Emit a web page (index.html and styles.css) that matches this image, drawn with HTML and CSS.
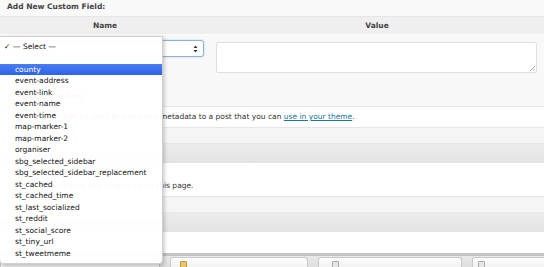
FILE: index.html
```html
<!DOCTYPE html>
<html>
<head>
<meta charset="utf-8">
<link rel="stylesheet" href="styles.css">
</head>
<body>
<div class="page">
  <div class="title">Add New Custom Field:</div>
  <div class="cf">
    <div class="cf-head">
      <div class="col-name">Name</div>
      <div class="col-value">Value</div>
    </div>
    <div class="cf-row">
      <div class="col-name">
        <div class="select"><span class="sel-text">— Select —</span><span class="arrows"><svg width="5" height="8" viewBox="0 0 5 8"><path d="M2.5 0.5 L4.5 3 L0.5 3 Z M2.5 7.5 L4.5 5 L0.5 5 Z" fill="#333"/></svg></span></div>
      </div>
      <div class="col-value">
        <div class="textarea"><svg class="grip" width="6" height="6" viewBox="0 0 6 6"><path d="M6 1 L1 6 M6 3.5 L3.5 6" stroke="#999" stroke-width="0.8"/></svg></div>
      </div>
    </div>
    <div class="cf-submit"><span class="btn">Add Custom Field</span></div>
  </div>
  <div class="desc">Custom fields can be used to add extra metadata to a post that you can <a href="#">use in your theme</a>.</div>
  <div class="gap"></div>
  <div class="box-head"></div>
  <div class="box-body"><span class="chk"></span>Allow trackbacks and pingbacks on this page.</div>
  <div class="gap"></div>
  <div class="box-head"></div>
  <div class="box-body short"></div>
  <div class="toolbar">
    <div class="tab t0"></div>
    <div class="tab t1"><span class="ico yellow"></span></div>
    <div class="tab t2"><span class="ico gray"></span></div>
    <div class="tab t3"><span class="ico gray"></span></div>
  </div>

  <div class="menu">
    <div class="item sel"><span class="check">✓</span>— Select —</div>
    <div class="item blank"></div>
    <div class="item hl">county</div>
    <div class="item">event-address</div>
    <div class="item">event-link</div>
    <div class="item">event-name</div>
    <div class="item">event-time</div>
    <div class="item">map-marker-1</div>
    <div class="item">map-marker-2</div>
    <div class="item">organiser</div>
    <div class="item">sbg_selected_sidebar</div>
    <div class="item">sbg_selected_sidebar_replacement</div>
    <div class="item">st_cached</div>
    <div class="item">st_cached_time</div>
    <div class="item">st_last_socialized</div>
    <div class="item">st_reddit</div>
    <div class="item">st_social_score</div>
    <div class="item">st_tiny_url</div>
    <div class="item">st_tweetmeme</div>
  </div>
</div>
</body>
</html>
```

FILE: styles.css
```css
* { box-sizing: border-box; }
html, body { margin: 0; padding: 0; }
body {
  width: 544px;
  height: 267px;
  overflow: hidden;
  background: #f9f9f9;
  font-family: "DejaVu Sans", "Liberation Sans", sans-serif;
  font-size: 7.5px;
  color: #333;
}
.page { position: relative; width: 544px; height: 267px; overflow: hidden; }

.title {
  height: 16px;
  padding: 2px 0 0 7px;
  font-weight: bold;
  font-size: 7.5px;
  color: #444;
}

.cf-head {
  display: flex;
  height: 19px;
  background: #efefef;
  border-top: 1px solid #e6e6e6;
  border-bottom: 1px solid #fbfbfb;
  font-weight: bold;
  color: #444;
}
.cf-head > div { display: flex; align-items: center; justify-content: center; }
.col-name { width: 210px; }
.col-value { flex: 1; }

.cf-row { display: flex; height: 52px; background: #f8f8f8; }
.cf-row .col-name { padding: 5px 6px 0 10px; }
.select {
  position: relative;
  height: 17px;
  border: 1px solid #8eb1dc;
  border-radius: 3px;
  box-shadow: 0 0 2px #a9c6ea;
  background: #fff;
  display: flex;
  align-items: center;
  padding-left: 6px;
}
.arrows { position: absolute; right: 5px; top: 4px; }
.cf-row .col-value { padding: 7px 7px 0 6px; }
.textarea {
  position: relative;
  height: 31px;
  background: #fff;
  border: 1px solid #dfdfdf;
  border-radius: 2px;
}
.grip { position: absolute; right: 1px; bottom: 1px; }

.cf-submit { height: 19px; background: #f8f8f8; padding: 3px 0 0 10px; }
.btn {
  display: inline-block;
  height: 13px;
  line-height: 11px;
  padding: 0 6px;
  border: 1px solid #ccc;
  border-radius: 8px;
  background: #f2f2f2;
  color: #333;
}

.desc {
  height: 22px;
  background: #fff;
  border-top: 1px solid #e5e5e5;
  border-bottom: 1px solid #e5e5e5;
  padding: 0 0 0 10px;
  line-height: 20px;
  color: #333;
}
.desc a { color: #21759b; }

.gap { height: 15px; background: #f5f5f5; }
.box-head {
  height: 20px;
  background: linear-gradient(#ececec, #e3e3e3);
  border-top: 1px solid #e8e8e8;
}
.box-body {
  background: #fff;
  padding: 12px 0 0 10px;
  border-bottom: 1px solid #e6e6e6;
  display: flex;
  align-items: center;
  gap: 4px;
  height: 34px;
}
.box-body.short { height: 21px; border-bottom: none; }
.chk {
  width: 8px; height: 8px;
  border: 1px solid #bbb;
  border-radius: 2px;
  background: #fff;
}

.toolbar {
  height: 14px;
  border-top: 3px solid #c4c4c4;
  background: linear-gradient(#e9e9e9, #dedede);
  display: flex;
  padding-top: 1px;
  gap: 10px;
}
.tab {
  flex: none;
  height: 12px;
  border: 1px solid #c9c9c9;
  border-bottom: none;
  border-radius: 3px 3px 0 0;
  background: linear-gradient(#fdfdfd, #f0f0f0);
  position: relative;
}
.t0 { width: 160px; }
.t1 { width: 138px; }
.t2 { width: 144px; }
.t3 { width: 100px; }
.ico { position: absolute; top: 3px; width: 7px; height: 8px; border-radius: 1px; }
.t1 .ico { left: 9px; }
.t2 .ico { left: 13px; }
.t3 .ico { left: 5px; }
.ico.yellow { background: #e8c66a; border: 1px solid #c49a33; }
.ico.gray { background: #e6e6e6; border: 1px solid #aaa; }

.menu {
  position: absolute;
  left: 0;
  top: 36px;
  width: 163px;
  padding: 3.5px 0 4px 0;
  background: rgba(255,255,255,0.96);
  border: 1px solid #cfcfcf;
  border-left: none;
  border-radius: 0 0 4px 4px;
  box-shadow: 1px 2px 4px rgba(0,0,0,0.25);
  color: #111;
}
.item {
  height: 11.5px;
  line-height: 11.5px;
  padding-left: 15px;
  white-space: nowrap;
}
.item.sel { padding-left: 4px; }
.check { display: inline-block; width: 9px; }
.item.hl {
  background: linear-gradient(#4a7ef2, #2d62ea);
  color: #fff;
}
```
